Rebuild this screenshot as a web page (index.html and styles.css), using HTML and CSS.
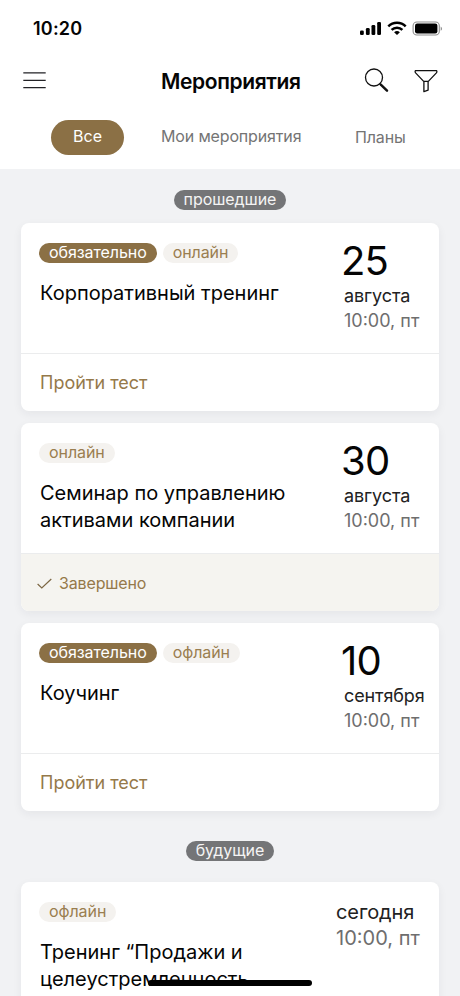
FILE: index.html
```html
<!DOCTYPE html>
<html lang="ru">
<head>
<meta charset="utf-8">
<title>Мероприятия</title>
<link rel="stylesheet" href="styles.css">
</head>
<body>
<div class="screen">
  <header class="header">
    <div class="status">
      <span class="clock">10:20</span>
      <svg class="status-icons" width="84" height="18" viewBox="0 0 84 18">
        <rect x="0" y="11.500" width="3.800" height="4.500" rx="1.3"/>
        <rect x="5.900" y="9" width="3.800" height="7" rx="1.3"/>
        <rect x="11.500" y="6" width="3.800" height="10" rx="1.3"/>
        <rect x="17.200" y="3" width="3.800" height="13" rx="1.3"/>
        <g fill="none" stroke="#000" stroke-width="2.5">
          <path d="M28.300 7.400a12.300 12.300 0 0 1 17.400 0"/>
          <path d="M31.600 10.900a7.600 7.600 0 0 1 10.800 0"/>
        </g>
        <path d="M34.100 13.300a4.200 4.200 0 0 1 5.800 0L37 16z"/>
        <rect x="53.100" y="3" width="26.200" height="13" rx="3.800" fill="none" stroke="#8d8d8d" stroke-width="1.100"/>
        <rect x="55" y="4.600" width="22.400" height="9.800" rx="2.200"/>
        <path d="M80.700 7.400v4.400c1.800-.7 1.800-3.700 0-4.400z" fill="#8d8d8d"/>
      </svg>
    </div>
    <div class="navbar">
      <svg class="menu" width="24" height="20" viewBox="0 0 24 20" fill="none" stroke="#222226" stroke-width="1.3"><path d="M.3 2.800h22.400M.3 10.300h22.400M.3 17.700h22.400"/></svg>
      <h1 class="heading">Мероприятия</h1>
      <svg class="search" width="26" height="26" viewBox="0 0 26 26" fill="none" stroke="#111"><circle cx="10" cy="9.500" r="8.500" stroke-width="1.300"/><path d="M15.700 15.700l1.500 1.500" stroke-width="1.300"/><path d="M16.800 16.700l6.200 6" stroke-width="2.500" stroke-linecap="round"/></svg>
      <svg class="filter" width="26" height="26" viewBox="0 0 26 26" fill="none" stroke="#111" stroke-width="1.300" stroke-linejoin="round"><path d="M2.300 2.700h21.400q.6 1.200-.3 2.200l-8.300 8.700v8.500l-4.200 1.600V13.600L2.600 4.900q-.9-1-.3-2.200zM10.900 13.400h4.200"/></svg>
    </div>
    <nav class="tabs">
      <a class="tab tab-active">Все</a>
      <a class="tab tab-mine">Мои мероприятия</a>
      <a class="tab tab-plans">Планы</a>
    </nav>
  </header>
  <main class="list">
    <div class="section"><span class="section-label">прошедшие</span></div>
    <article class="card">
      <div class="body">
        <div class="info">
          <div class="tags"><span class="tag tag-required">обязательно</span><span class="tag">онлайн</span></div>
          <h2 class="title">Корпоративный тренинг</h2>
        </div>
        <div class="date"><div class="day">25</div><div class="month">августа</div><div class="time">10:00, пт</div></div>
      </div>
      <div class="footer"><a class="action">Пройти тест</a></div>
    </article>
    <article class="card">
      <div class="body">
        <div class="info">
          <div class="tags"><span class="tag">онлайн</span></div>
          <h2 class="title">Семинар по управлению<br>активами компании</h2>
        </div>
        <div class="date"><div class="day">30</div><div class="month">августа</div><div class="time">10:00, пт</div></div>
      </div>
      <div class="footer footer-done">
        <svg class="check" width="15" height="12" viewBox="0 0 15 12" fill="none" stroke="#7d6845" stroke-width="1.200"><path d="M.6 6l4.200 4L14.300 1"/></svg>
        <span class="done">Завершено</span>
      </div>
    </article>
    <article class="card">
      <div class="body">
        <div class="info">
          <div class="tags"><span class="tag tag-required">обязательно</span><span class="tag">офлайн</span></div>
          <h2 class="title">Коучинг</h2>
        </div>
        <div class="date"><div class="day">10</div><div class="month">сентября</div><div class="time">10:00, пт</div></div>
      </div>
      <div class="footer"><a class="action">Пройти тест</a></div>
    </article>
    <div class="section section-next"><span class="section-label">будущие</span></div>
    <article class="card">
      <div class="body">
        <div class="info">
          <div class="tags"><span class="tag">офлайн</span></div>
          <h2 class="title">Тренинг “Продажи и<br>целеустремленность</h2>
        </div>
        <div class="date date-today"><div class="month">сегодня</div><div class="time">10:00, пт</div></div>
      </div>
    </article>
  </main>
  <div class="home-indicator"></div>
</div>
</body>
</html>
```
FILE: styles.css
```css
* { box-sizing: border-box; }
body { margin: 0; background: #f1f2f4; font-family: Inter, "Liberation Sans", sans-serif; color: #050505; }
h1, h2 { margin: 0; }
svg { display: block; flex: none; }
.screen { position: relative; width: 460px; height: 996px; overflow: hidden; background: #f1f2f4; }
.header { height: 169px; background: #fff; padding-top: 18px; }
.status { display: flex; justify-content: space-between; height: 20px; padding: 0 16px 0 33px; }
.clock { font-size: 18px; line-height: 22px; font-weight: 600; letter-spacing: 0.2px; }
.status-icons { margin-top: 1px; }
.navbar { display: flex; height: 32px; margin-top: 27px; padding: 0 21px 0 23px; }
.menu { margin-top: 5px; }
.heading { margin-left: 114px; width: 203px; font-size: 21px; line-height: 33px; font-weight: 600; letter-spacing: -0.38px; white-space: nowrap; }
.search { margin-top: 3px; }
.filter { margin: 3px 0 0 23px; }
.tabs { display: flex; margin: 23px 0 0 51px; height: 35px; color: #747474; font-size: 16px; line-height: 32px; letter-spacing: -0.15px; white-space: nowrap; }
.tab-active { width: 73px; height: 35px; border-radius: 18px; background: #8b7045; color: #fff; text-align: center; letter-spacing: 0; }
.tab-mine { margin-left: 37px; width: 193px; }
.tab-plans { padding: 1px 0 0 1px; }
.list { padding: 21px 21px 0; }
.section { display: flex; justify-content: center; height: 33px; }
.section-label { height: 20px; padding: 0 10px; border-radius: 10px; background: #747577; color: #f4f4f4; font-size: 16px; line-height: 19px; letter-spacing: -0.05px; }
.section-next { height: 41px; margin-top: 30px; }
.card { height: 188px; margin-bottom: 12px; border-radius: 8px; background: #fff; box-shadow: 0 3px 10px rgba(30, 40, 50, 0.06); overflow: hidden; }
.body { display: flex; height: 130px; padding: 20px 0 0 19px; }
.info { width: 304px; }
.tags { display: flex; gap: 6px; height: 20px; margin-left: -1px; }
.tag { height: 20px; padding: 0 10px; border-radius: 10px; background: #f4f2ef; color: #9a7e50; font-size: 16px; line-height: 19px; letter-spacing: -0.08px; }
.tag-required { background: #8b7045; color: #fff; }
.title { margin-top: 17px; font-size: 20px; line-height: 27px; font-weight: 400; white-space: nowrap; }
.date { white-space: nowrap; }
.day { margin: -2px 0 0 -3px; font-size: 40px; line-height: 40px; letter-spacing: -0.8px; }
.month { margin-top: 2px; font-size: 18px; line-height: 25px; letter-spacing: -0.1px; color: #222; }
.time { font-size: 18px; line-height: 26px; color: #6e6e6e; }
.date-today { margin-left: -8px; }
.date-today .month, .date-today .time { font-size: 20px; line-height: 26px; }
.date-today .month { margin-top: -3px; }
.footer { display: flex; height: 58px; padding: 0 19px; border-top: 1px solid #ebeced; color: #95794a; font-size: 18px; line-height: 57px; }
.footer-done { padding-left: 16px; background: #f5f4f0; font-size: 16px; line-height: 59px; letter-spacing: -0.15px; }
.check { margin: 24px 7px 0 0; }
.home-indicator { position: absolute; left: 148px; top: 980px; width: 164px; height: 6px; border-radius: 3px; background: #000; }
```
